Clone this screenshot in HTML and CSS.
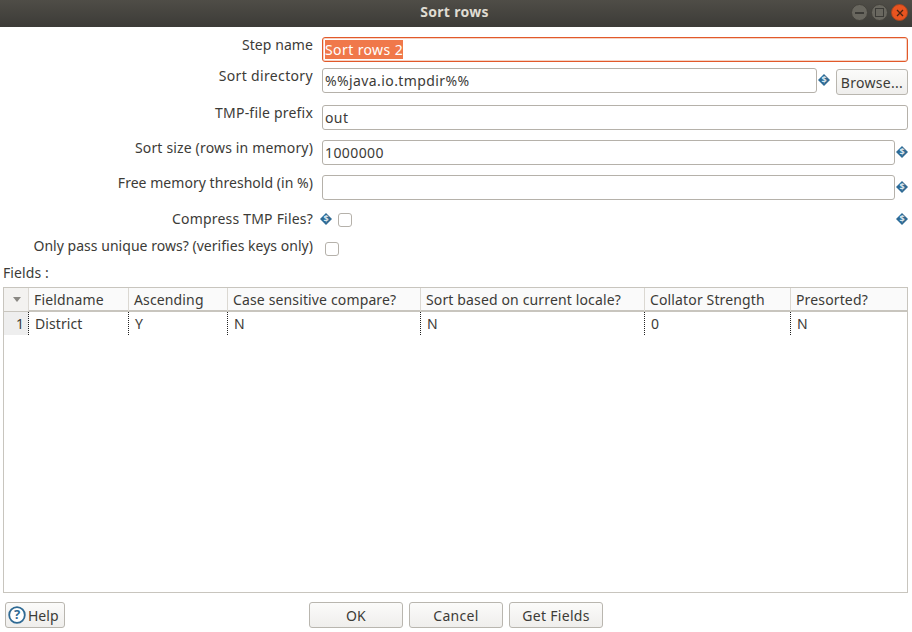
FILE: index.html
```html
<!DOCTYPE html>
<html lang="en">
<head>
    <meta charset="UTF-8">
    <title>Sort rows</title>
    <link rel="stylesheet" href="styles.css">
</head>
<body>
    <div class="window">
        <div class="titlebar">
            <span class="title">Sort rows</span>
            <div class="win-buttons">
                <span class="win-btn"><i class="min-mark"></i></span>
                <span class="win-btn"><i class="max-mark"></i></span>
                <span class="win-btn win-close">
                    <svg width="10" height="10" viewBox="0 0 10 10"><path d="M2 2 8 8M8 2 2 8" stroke="#4a2412" stroke-width="1.3"/></svg>
                </span>
            </div>
        </div>

        <div class="form">
            <div class="row row-step">
                <label class="label">Step name</label>
                <div class="input input-focus"><span class="selected">Sort rows 2</span></div>
            </div>
            <div class="row row-dir">
                <label class="label">Sort directory</label>
                <div class="input">%%java.io.tmpdir%%</div>
                <span class="var-icon">$</span>
                <button class="btn btn-browse">Browse...</button>
            </div>
            <div class="row row-tmp">
                <label class="label">TMP-file prefix</label>
                <div class="input">out</div>
            </div>
            <div class="row row-size">
                <label class="label">Sort size (rows in memory)</label>
                <div class="input">1000000</div>
                <span class="var-icon">$</span>
            </div>
            <div class="row row-free">
                <label class="label">Free memory threshold (in %)</label>
                <div class="input"></div>
                <span class="var-icon">$</span>
            </div>
            <div class="row row-compress">
                <label class="label">Compress TMP Files?</label>
                <span class="var-icon icon-left">$</span>
                <span class="check"></span>
                <span class="var-icon icon-end">$</span>
            </div>
            <div class="row row-unique">
                <label class="label">Only pass unique rows? (verifies keys only)</label>
                <span class="check check-unique"></span>
            </div>
        </div>

        <div class="fields-label">Fields :</div>

        <div class="table">
            <div class="thead">
                <div class="th th-num"><i class="sort-arrow"></i></div>
                <div class="th">Fieldname</div>
                <div class="th">Ascending</div>
                <div class="th">Case sensitive compare?</div>
                <div class="th">Sort based on current locale?</div>
                <div class="th">Collator Strength</div>
                <div class="th">Presorted?</div>
            </div>
            <div class="tr">
                <div class="td td-num">1</div>
                <div class="td">District</div>
                <div class="td">Y</div>
                <div class="td">N</div>
                <div class="td">N</div>
                <div class="td">0</div>
                <div class="td">N</div>
            </div>
        </div>

        <div class="footer">
            <button class="btn btn-help">
                <svg width="20" height="20" viewBox="0 0 20 20"><circle cx="10" cy="10" r="7.8" fill="#fff" stroke="#2f6a94" stroke-width="1.8"/><text x="10" y="14.4" text-anchor="middle" class="help-q">?</text></svg>
                Help
            </button>
            <div class="footer-center">
                <button class="btn btn-main">OK</button>
                <button class="btn btn-main">Cancel</button>
                <button class="btn btn-main">Get Fields</button>
            </div>
        </div>
    </div>
</body>
</html>
```

FILE: styles.css
```css
* { margin: 0; padding: 0; box-sizing: border-box; }
body {
    font-family: "Noto Sans", "Open Sans", sans-serif;
    font-size: 14px;
    letter-spacing: .08px;
    color: #3c3b37;
    background: #fff;
    overflow: hidden;
}
.window { width: 912px; height: 632px; display: flex; flex-direction: column; }

.titlebar {
    height: 27px;
    flex: none;
    background: linear-gradient(#4f4d47, #3c3b37);
    display: flex;
    align-items: center;
    justify-content: center;
    position: relative;
}
.title { color: #dfdbd2; font-size: 14px; font-weight: bold; line-height: 24px; height: 24px; margin-top: -3px; letter-spacing: .3px; margin-left: -3px; }
.win-buttons { position: absolute; right: 4px; top: 4px; display: flex; gap: 3px; }
.win-btn {
    width: 17px;
    height: 17px;
    border-radius: 50%;
    background: #69675f;
    border: 1px solid #44423c;
    display: flex;
    align-items: center;
    justify-content: center;
}
.win-close { background: #e95420; border-color: #a9451f; }
.min-mark { width: 9px; height: 2px; background: #3c3b37; }
.max-mark { width: 9px; height: 9px; border: 1px solid #3c3b37; }

.form { padding: 10px 4px 0 0; flex: none; }
.row { display: flex; align-items: flex-start; }
.label {
    width: 313px;
    flex: none;
    margin-right: 9px;
    margin-top: -1px;
    text-align: right;
    line-height: 17px;
    white-space: nowrap;
}
.input {
    flex: 1;
    height: 25px;
    border: 1px solid #b5b1aa;
    border-radius: 3px;
    background: #fff;
    padding-left: 2px;
    line-height: 24px;
    white-space: nowrap;
    letter-spacing: .4px;
}
.input-focus { border-color: #e2592a; box-shadow: inset 0 0 0 1px #f5d3c5; }
.selected { background: #f0784a; color: #fff; }
.var-icon {
    width: 12px;
    height: 12px;
    flex: none;
    background: #2f6a94;
    clip-path: polygon(50% 0, 100% 50%, 50% 100%, 0 50%);
    color: #dbe6ee;
    font-size: 9px;
    font-weight: bold;
    line-height: 12px;
    text-align: center;
    letter-spacing: 0;
}
.row-step { height: 31px; }
.row-dir { height: 37px; }
.row-dir .var-icon { margin: 6px 0 0 1px; }
.row-dir .label { letter-spacing: .35px; }
.row-tmp { height: 35px; }
.row-tmp .label { letter-spacing: .2px; }
.row-size { height: 35px; }
.row-size .label { letter-spacing: .16px; }
.row-size .var-icon, .row-free .var-icon { margin: 6px 0 0 1px; }
.row-free { height: 37px; }
.row-free .label { letter-spacing: .04px; }
.row-compress { height: 29px; }
.row-compress .label { margin-right: 7px; margin-top: -2px; letter-spacing: .2px; }
.row-compress .icon-left { margin-top: 1px; }
.row-compress .icon-end { margin: 1px 0 0 auto; }
.row-unique { height: 22px; }
.row-unique .label { margin-right: 12px; margin-top: -4px; letter-spacing: .03px; }
.check {
    width: 14px;
    height: 14px;
    flex: none;
    margin: 1px 0 0 6px;
    border: 1px solid #b5b1aa;
    border-radius: 3px;
    background: #fff;
}
.check-unique { margin: 1px 0 0 0; }

.fields-label { margin: 1px 0 0 3px; line-height: 17px; height: 18px; flex: none; }

.table {
    margin: 5px 4px 0 3px;
    height: 306px;
    flex: none;
    border: 1px solid #c8c5be;
    background: #fff;
}
.thead, .tr {
    display: grid;
    grid-template-columns: 25px 100px 99px 193px 224px 146px 1fr;
}
.thead { height: 24px; background: #fafafa; border-bottom: 2px solid #c8c5be; }
.th {
    line-height: 23px;
    padding-left: 5px;
    border-right: 1px solid #dbd8d2;
    white-space: nowrap;
    letter-spacing: .14px;
}
.th:last-child { border-right: 0; }
.th-num { position: relative; padding: 0; background: #f3f2f0; }
.sort-arrow {
    position: absolute;
    left: 9px;
    top: 9px;
    border-left: 4px solid transparent;
    border-right: 4px solid transparent;
    border-top: 5px solid #8a8883;
}
.tr { height: 23px; }
.td {
    line-height: 23px;
    padding-left: 6px;
    border-right: 1px dotted #222;
    white-space: nowrap;
}
.td:last-child { border-right: 0; }
.td-num { background: #eeeeee; text-align: right; padding: 0 4px 0 0; border-right: 1px dotted #222; }

.footer { position: relative; display: flex; justify-content: center; margin-top: 9px; height: 26px; flex: none; }
.footer-center { display: flex; gap: 6px; }
.btn {
    font: inherit;
    color: inherit;
    height: 26px;
    border: 1px solid #b9b6af;
    border-radius: 3px;
    background: linear-gradient(#fbfbfa, #efeeec);
}
.btn-main { width: 94px; letter-spacing: .3px; }
.btn-browse { width: 72px; margin: 1px 0 0 6px; letter-spacing: .3px; padding: 0; }
.btn-help {
    position: absolute;
    left: 5px;
    top: 0;
    width: 60px;
    display: flex;
    align-items: center;
    gap: 1px;
    padding-left: 1px;
}
.help-q { font-size: 13px; font-weight: bold; fill: #2f6a94; }
```
